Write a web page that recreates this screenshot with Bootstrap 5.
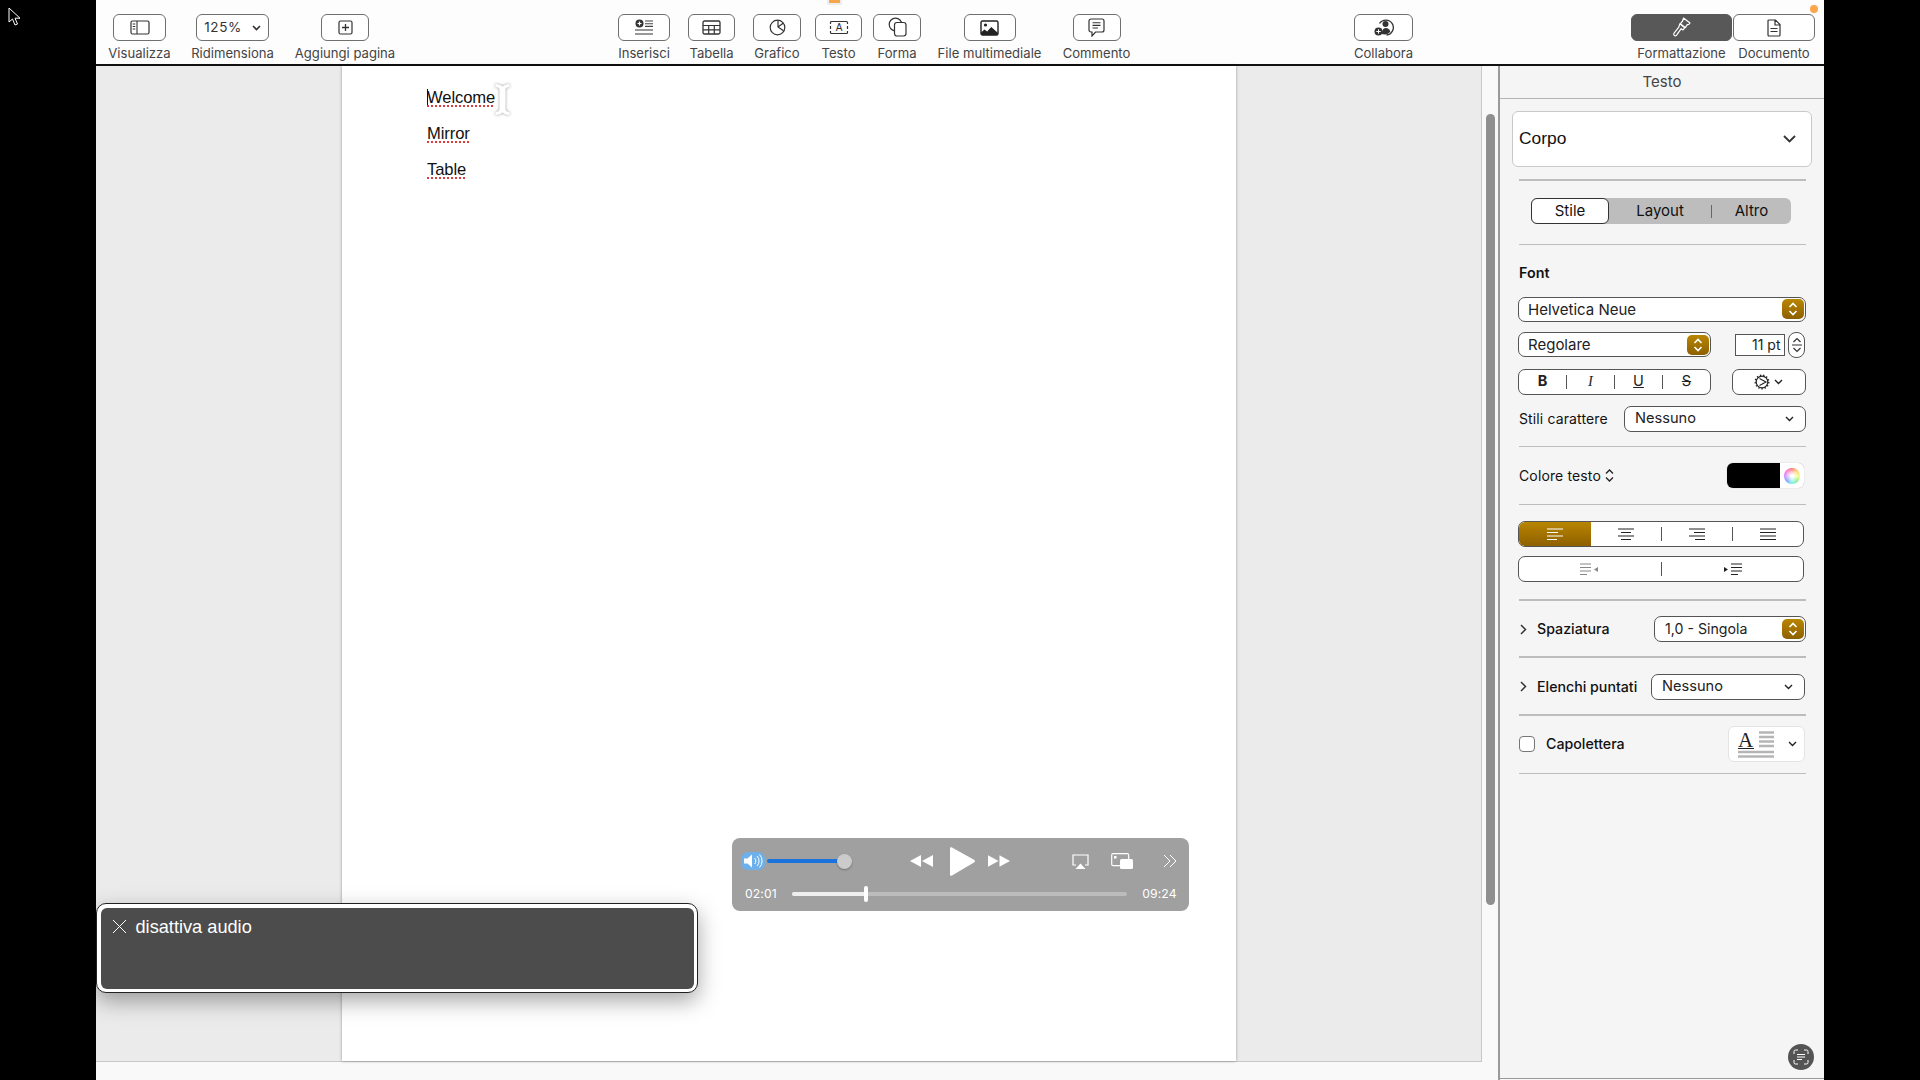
<!DOCTYPE html>
<html lang="it">
<head>
<meta charset="utf-8">
<title>Pages</title>
<link href="https://cdn.jsdelivr.net/npm/bootstrap@5.3.0/dist/css/bootstrap.min.css" rel="stylesheet">
<style>
html,body{height:100%;overflow:hidden;background:#000}
body{font-family:Inter,"Liberation Sans",sans-serif;color:#222;width:1920px;height:1080px;position:relative}
.shell{width:1728px;height:1080px;margin-left:96px;background:#f9f9f9}
.topbar{height:66px;background:#fdfdfd;border-bottom:2px solid #111;padding-left:12px}
.ti{height:64px;padding-top:14px;flex:none}
.tb{height:27px;border:1.5px solid #6f6f6f;border-radius:6px;background:#fff;padding:0;flex:none;color:#333}
.tl{font-size:13.1px;line-height:16px;margin-top:3.5px;color:#444;white-space:nowrap}
.i1{width:63px}.i1 .tb{width:53px}
.i2{width:83px;margin-left:20px}.i2 .tb{width:73px;font-size:13.5px;letter-spacing:.6px;gap:10px}
.i3{width:100px;margin-left:21px}.i3 .tb{width:48px}
.i4{width:52px;margin-left:223px}.i4 .tb{width:52px}
.i5{width:47px;margin-left:18px}.i5 .tb{width:47px}
.i6{width:48px;margin-left:18px}.i6 .tb{width:48px}
.i7{width:47px;margin-left:14px}.i7 .tb{width:47px}
.i8{width:48px;margin-left:11px}.i8 .tb{width:48px}
.i9{width:105px;margin-left:16px}.i9 .tb{width:52px}
.i10{width:67px;margin-left:21px}.i10 .tb{width:48px}
.i11{width:59px;margin-left:224px}.i11 .tb{width:59px}
.i12{width:101px;margin-left:218px}.i12 .tb{width:101px;background:#585858;border-color:#585858}
.i13{width:82px;margin-left:1px}.i13 .tb{width:82px}
.workspace{height:1014px}
.canvasarea{width:1404px;height:1014px;background:#f9f9f9;border-right:2px solid #9a9a9a;flex:none}
.canvasmain{height:996px;width:1386px;background:#ebebeb;border-right:1.5px solid #c8c8c8;border-bottom:1.5px solid #c8c8c8;position:relative}
.pagesheet{margin-left:246px;width:893.5px;height:100%;background:#fff;box-shadow:0 0 3px rgba(0,0,0,.35);padding:21.5px 0 0 85px;font-family:"Liberation Sans",sans-serif;font-size:16.6px;color:#111}
.pline{height:36px;line-height:20px;letter-spacing:-.1px}
.pword{text-decoration:underline dotted #dd3b3b 2px;text-underline-offset:3px}
.caret-mark{display:inline-block;width:1px;height:17px;background:#111;vertical-align:-3px;margin-right:-1px}
.scrollthumb{width:9.5px;height:791px;background:#8f8f8f;border-radius:5px;top:48px;left:1389.5px;position:absolute}
.inspector{width:324px;height:1013px;background:#f5f5f5;padding:0 18px;border-bottom:1.5px solid #999;flex:none}
.insp-title{height:33px;margin:0 -18px;border-bottom:1.5px solid #b5b5b5;text-align:center;font-size:15px;line-height:32.5px;color:#444}
.stylebox{height:56px;margin:11.5px -6px 0;width:300px;background:#fff;border:1.5px solid #c9c9c9;border-radius:6px;padding:0 15px 0 6px;font-size:17.4px;color:#111;font-family:"Liberation Sans",sans-serif}
.rule{height:1.5px;background:#bdbdbd;margin:0 0 0 1px}
.r1{margin-top:12.5px}.r2{margin-top:19.5px}.r3{margin-top:14px}.r5{margin-top:15.5px}.r6{margin-top:17px}.r8{margin-top:14.5px}.r9{margin-top:10.5px}
.tabs{width:260px;height:26px;margin:17.5px 0 0 13px;background:#bdbdbd;border-radius:6px;font-size:15px;color:#111}
.tabon{width:78px;height:26px;background:#fff;border:1.5px solid #333;border-radius:6px}
.tabl{width:102px}
.tabsep{width:1px;height:13px;background:#666}
.tabr{width:79px}
.flabel{font-size:14.3px;line-height:20px;font-weight:600;margin:17.5px 0 0 1px;color:#111}
.ctl{height:25px;background:#fff;border:1.5px solid #555;border-radius:7px;font-size:15px;color:#222;padding:1.5px 1px 0 9px}
.ctl .gold{margin-top:-1.5px}
.fontsel{margin-top:14px}
.w193{width:193px}
.row2{margin-top:10px;height:26px}
.row3{margin-top:11px;height:26px}
.row4{margin-top:11px;height:26px}
.gold{width:22px;height:20px;border-radius:5px;background:linear-gradient(#b98600,#8d6000);flex:none}
.ptbox{width:50px;height:22px;margin-left:23.5px;background:#fff;border:1.2px solid #555;font-size:14px;text-align:right;padding-right:3px;line-height:20px;color:#222}
.spin{width:17px;height:26px;margin-left:3.5px;background:#fff;border:1.5px solid #555;border-radius:8px}
.biu{height:26px;width:193px;background:#fff;border:1.5px solid #555;border-radius:7px;font-size:14.5px}
.biu .cellb{flex:1;text-align:center;line-height:1}
.serifi{font-family:"Liberation Serif",serif;font-style:italic}
.vsep{width:1px;height:14px;background:#555;flex:none}
.gearbtn{width:74px;height:26px;margin-left:20.500px;background:#fff;border:1.5px solid #555;border-radius:7px}
.lbl{font-size:14px;letter-spacing:.13px;color:#111;margin-left:1px;white-space:nowrap}
.lblb{font-weight:500;font-size:14.2px;letter-spacing:0}
.nsel{height:26px;background:#fff;border:1.5px solid #555;border-radius:7px;font-size:14.6px;color:#222;padding:1px 11px 0 10px}
.w182{width:182px;margin-left:auto}
.colorrow{height:25px;margin-top:16px}
.swatchwrap{width:77px;height:25px;margin-left:auto;margin-right:2px;border-radius:6px;overflow:hidden;background:#fff;box-shadow:0 0 1px rgba(0,0,0,.35)}
.swatchblack{width:53px;height:25px;background:#000}
.wheel{width:16px;height:16px;border-radius:50%;margin-left:4px;background:radial-gradient(circle,#fff 10%,rgba(255,255,255,0) 75%),conic-gradient(#f66,#fc5,#ef6,#7e7,#6ee,#69f,#c7f,#f6c,#f66)}
.alignbar{width:286px;height:26px;background:#fff;border:1.5px solid #555;border-radius:7px;overflow:hidden;margin-top:16px}
.alignbar .cellb{width:70px;height:100%;flex:none}
.alignbar .cellb.on{width:72px;background:linear-gradient(#b88500,#8e6000)}
.indentbar{width:286px;height:26px;background:#fff;border:1.5px solid #555;border-radius:7px;margin-top:9px}
.indentbar .cellb{flex:1}
.chev{margin:0 9px 0 2px;flex:none}
.spazrow{height:26px;margin-top:15.5px}
.sp152{width:152px;height:26px;margin-left:auto;background:#fff;border:1.5px solid #555;border-radius:7px;font-size:14.2px;padding:0 1px 0 10px}
.elerow{height:26px;margin-top:16px}
.sp154{width:154px;margin-left:auto;margin-right:1px}
.caprow{height:36px;margin-top:10.5px}
.chk{width:16px;height:16px;margin:0 10px 0 1px;background:#fff;border:1.2px solid #777;border-radius:4px;flex:none}
.dropcap{width:77px;height:36px;margin-left:auto;margin-right:1px;background:#fff;border:1.2px solid #e4e4e4;border-radius:6px;padding-left:9px;gap:14px}
.ocrbadge{position:absolute;left:1788px;top:1044px;width:26px;height:26px;border-radius:50%;background:#545454}
.dotorange{position:absolute;left:1810px;top:5px;width:8px;height:8px;border-radius:50%;background:#fba64a}
.topmark{position:absolute;left:827px;top:0;width:15px;height:5px;background:#f6a64b;border:2px solid #eee;border-top:0;border-radius:0 0 2px 2px}
.pointer{position:absolute;left:8px;top:7px}
.ibeam{position:absolute;left:494px;top:83px;filter:drop-shadow(0 0 1.5px rgba(0,0,0,.4))}
.vplayer{position:absolute;left:732px;top:838px;width:457px;height:73px;background:#a0a0a0;border-radius:8px;color:#fff}
.vtop{height:46px;padding-left:9px}
.vbottom{height:20px;padding:0 12px 0 13px}
.vtime{font-size:12.2px;letter-spacing:.1px;flex:none}
.vknob{width:15px;height:15px;border-radius:50%;background:#cbcbcb;box-shadow:0 1px 2px rgba(0,0,0,.3);margin-left:-2px;flex:none}
.vol{width:72px;height:4px;border-radius:2px;background:#1a73dc;margin-left:2px;flex:none}
.vtrack{width:335px;height:4px;border-radius:2px;background:#bcbcbc;position:relative;margin-left:15.5px;margin-right:15px;flex:none}
.vfill{width:74px;height:4px;background:#efefef;border-radius:2px}
.vhandle{position:absolute;left:72px;top:-6px;width:4px;height:16px;background:#fff;border-radius:2px}
.vc1{margin-left:58px}.vc2{margin-left:17px}.vc3{margin-left:13px}.vc4{margin-left:62px}.vc5{margin-left:22px}.vc6{margin-left:30px}
.vplayer svg{flex:none}
.hintbox{position:absolute;left:96px;top:903px;width:602px;height:90px;background:#fff;border:1px solid #222;border-radius:10px;padding:3.5px;box-shadow:0 8px 22px rgba(0,0,0,.35)}
.hintin{width:100%;height:100%;background:#4c4c4c;border-radius:6px;padding:8px 11px;color:#fff;font-family:"Liberation Sans",sans-serif;font-size:18.2px;line-height:22px}
.hintx{margin:3px 1px 0 0;flex:none}
</style>
</head>
<body>
<div class="shell d-flex flex-column">
  <div class="topbar d-flex">
    <div class="ti i1 d-flex flex-column align-items-center"><button class="tb d-flex align-items-center justify-content-center"><svg width="20" height="15" viewBox="0 0 20 15"><rect x="1" y="1" width="18" height="13" rx="1.5" fill="none" stroke="#333" stroke-width="1.2"/><path d="M7 1v13M2.7 4h2.6M2.7 6.5h2.6M2.7 9h2.6" stroke="#333" stroke-width="1.1"/></svg></button><div class="tl">Visualizza</div></div>
    <div class="ti i2 d-flex flex-column align-items-center"><button class="tb d-flex align-items-center justify-content-center">125%<svg width="9" height="6" viewBox="0 0 9 6"><path d="M1 1l3.5 3.5L8 1" fill="none" stroke="#333" stroke-width="1.6"/></svg></button><div class="tl">Ridimensiona</div></div>
    <div class="ti i3 d-flex flex-column align-items-center"><button class="tb d-flex align-items-center justify-content-center"><svg width="15" height="15" viewBox="0 0 15 15"><rect x="1" y="1" width="13" height="13" rx="1.5" fill="none" stroke="#333" stroke-width="1.2"/><path d="M7.5 4v7M4 7.5h7" stroke="#333" stroke-width="1.3"/></svg></button><div class="tl">Aggiungi pagina</div></div>

    <div class="ti i4 d-flex flex-column align-items-center"><button class="tb d-flex align-items-center justify-content-center"><svg width="20" height="17" viewBox="0 0 20 17"><circle cx="5.5" cy="4.5" r="4" fill="#333"/><path d="M5.5 2.5v4M3.5 4.5h4" stroke="#fff" stroke-width="1.2"/><path d="M11 2h8M11 4.7h8M11 7.4h8" stroke="#444" stroke-width="1.1"/><path d="M1 11h18M1 15h18" stroke="#777" stroke-width="1.5"/></svg></button><div class="tl">Inserisci</div></div>
    <div class="ti i5 d-flex flex-column align-items-center"><button class="tb d-flex align-items-center justify-content-center"><svg width="19" height="15" viewBox="0 0 19 15"><rect x="1" y="1" width="17" height="13" rx="1.5" fill="none" stroke="#333" stroke-width="1.3"/><path d="M1 5.5h17M1 9.8h17M6.7 5.5V14M12.3 5.5V14" stroke="#333" stroke-width="1.2"/></svg></button><div class="tl">Tabella</div></div>
    <div class="ti i6 d-flex flex-column align-items-center"><button class="tb d-flex align-items-center justify-content-center"><svg width="17" height="17" viewBox="0 0 17 17"><circle cx="8.5" cy="8.5" r="7.3" fill="none" stroke="#333" stroke-width="1.2"/><path d="M9 1.2V8l5.5 3.8M9 8l5.5-4" fill="none" stroke="#333" stroke-width="1.2"/></svg></button><div class="tl">Grafico</div></div>
    <div class="ti i7 d-flex flex-column align-items-center"><button class="tb d-flex align-items-center justify-content-center"><svg width="20" height="15" viewBox="0 0 20 15"><path d="M1.5 4V2.500a1 1 0 0 1 1-1h15a1 1 0 0 1 1 1V4M1.5 6v3M18.5 6v3M1.5 11v1.500a1 1 0 0 0 1 1h15a1 1 0 0 0 1-1V11" fill="none" stroke="#333" stroke-width="1.2"/><text x="10" y="11.2" text-anchor="middle" font-family="Liberation Sans" font-size="10" fill="#333">A</text></svg></button><div class="tl">Testo</div></div>
    <div class="ti i8 d-flex flex-column align-items-center"><button class="tb d-flex align-items-center justify-content-center"><svg width="19" height="21" viewBox="0 0 19 21"><circle cx="7.5" cy="7.5" r="6.3" fill="none" stroke="#333" stroke-width="1.2"/><rect x="6.5" y="5.5" width="11.5" height="13.5" rx="2.4" fill="#fff" stroke="#333" stroke-width="1.2"/></svg></button><div class="tl">Forma</div></div>
    <div class="ti i9 d-flex flex-column align-items-center"><button class="tb d-flex align-items-center justify-content-center"><svg width="19" height="16" viewBox="0 0 19 16"><rect x="1" y="1" width="17" height="14" rx="1.5" fill="#fff" stroke="#222" stroke-width="1.4"/><circle cx="5.5" cy="5" r="1.6" fill="#222"/><path d="M1 15v-2.500l3.500-3 2.600 2 4.200-4.600 6.700 6V15z" fill="#222"/></svg></button><div class="tl">File multimediale</div></div>
    <div class="ti i10 d-flex flex-column align-items-center"><button class="tb d-flex align-items-center justify-content-center"><svg width="17" height="19" viewBox="0 0 17 19"><path d="M3 1h11a2 2 0 0 1 2 2v9a2 2 0 0 1-2 2H7.500L4 18v-4H3a2 2 0 0 1-2-2V3a2 2 0 0 1 2-2z" fill="none" stroke="#333" stroke-width="1.2"/><path d="M4.5 4.7h8M4.5 7.4h8M4.5 10h5.5" stroke="#333" stroke-width="1.1"/></svg></button><div class="tl">Commento</div></div>

    <div class="ti i11 d-flex flex-column align-items-center"><button class="tb d-flex align-items-center justify-content-center"><svg width="20" height="19" viewBox="0 0 20 19"><path d="M5.5 5.500a7.500 7.500 0 1 1 7 11.500" fill="none" stroke="#333" stroke-width="1.3"/><circle cx="11.5" cy="6" r="3" fill="#333"/><path d="M8 16c-.3-3 1.300-6 3.700-6s4 1.500 4.600 3.500c-1.500 2.500-5 3.500-8.300 2.500z" fill="#333"/><circle cx="4.5" cy="13.5" r="4" fill="#333"/><path d="M4.5 11.300v4.400M2.300 13.500h4.400" stroke="#fff" stroke-width="1"/></svg></button><div class="tl">Collabora</div></div>
    <div class="ti i12 d-flex flex-column align-items-center"><button class="tb d-flex align-items-center justify-content-center"><svg width="18" height="21" viewBox="0 0 18 21"><path d="M10.500 1l6.500 5-1.200 1.500-1.500.2-2 3-5-3.900 2.300-2.800z" fill="none" stroke="#fff" stroke-width="1.2" stroke-linejoin="round"/><path d="M6.800 6.800l5 3.900-1.800 2.300-1.800-1.300-4.600 6.500a1.600 1.600 0 1 1-2.500-2l4.700-6z" fill="none" stroke="#fff" stroke-width="1.2" stroke-linejoin="round"/></svg></button><div class="tl">Formattazione</div></div>
    <div class="ti i13 d-flex flex-column align-items-center"><button class="tb d-flex align-items-center justify-content-center"><svg width="14" height="18" viewBox="0 0 14 18"><path d="M1 2a1 1 0 0 1 1-1h6.500L13 5.500V16a1 1 0 0 1-1 1H2a1 1 0 0 1-1-1zM8 1v5h5" fill="none" stroke="#333" stroke-width="1.2"/><path d="M3.5 9.500h7M3.5 12.500h7" stroke="#333" stroke-width="1.1"/></svg></button><div class="tl">Documento</div></div>
  </div>

  <div class="workspace d-flex">
    <div class="canvasarea position-relative">
      <div class="canvasmain">
        <div class="pagesheet">
          <div class="pline"><span class="caret-mark"></span><span class="pword">Welcome</span></div>
          <div class="pline"><span class="pword">Mirror</span></div>
          <div class="pline"><span class="pword">Table</span></div>
        </div>
      </div>
      <div class="scrollthumb"></div>
    </div>

    <aside class="inspector">
      <div class="insp-title">Testo</div>
      <div class="stylebox d-flex align-items-center justify-content-between">Corpo<svg width="13" height="8" viewBox="0 0 13 8"><path d="M1 1l5.500 5.500L12 1" fill="none" stroke="#333" stroke-width="1.8"/></svg></div>
      <div class="rule r1"></div>
      <div class="tabs d-flex align-items-center">
        <div class="tabon d-flex align-items-center justify-content-center">Stile</div>
        <div class="tabl text-center">Layout</div><div class="tabsep"></div><div class="tabr text-center">Altro</div>
      </div>
      <div class="rule r2"></div>
      <div class="flabel">Font</div>
      <div class="ctl fontsel d-flex align-items-center justify-content-between">Helvetica Neue<span class="gold d-flex align-items-center justify-content-center"><svg width="10" height="14" viewBox="0 0 10 14"><path d="M1.500 5L5 1.500 8.500 5M1.500 9L5 12.500 8.500 9" fill="none" stroke="#fff" stroke-width="1.6"/></svg></span></div>
      <div class="row2 d-flex align-items-center">
        <div class="ctl w193 d-flex align-items-center justify-content-between">Regolare<span class="gold d-flex align-items-center justify-content-center"><svg width="10" height="14" viewBox="0 0 10 14"><path d="M1.500 5L5 1.500 8.500 5M1.500 9L5 12.500 8.500 9" fill="none" stroke="#fff" stroke-width="1.6"/></svg></span></div>
        <div class="ptbox">11 pt</div>
        <div class="spin d-flex flex-column align-items-center justify-content-center"><svg width="10" height="18" viewBox="0 0 10 18"><path d="M1.500 6L5 2.500 8.500 6M0 9h10M1.500 12L5 15.500 8.500 12" fill="none" stroke="#333" stroke-width="1.2"/></svg></div>
      </div>
      <div class="row3 d-flex align-items-center">
        <div class="biu d-flex align-items-center">
          <div class="cellb"><b>B</b></div><div class="vsep"></div>
          <div class="cellb"><span class="serifi">I</span></div><div class="vsep"></div>
          <div class="cellb text-decoration-underline">U</div><div class="vsep"></div>
          <div class="cellb text-decoration-line-through">S</div>
        </div>
        <div class="gearbtn d-flex align-items-center justify-content-center gap-1"><svg width="16" height="16" viewBox="0 0 16 16"><circle cx="8" cy="8" r="5.8" fill="none" stroke="#222" stroke-width="1.2"/><circle cx="8" cy="8" r="6.8" fill="none" stroke="#222" stroke-width="1.4" stroke-dasharray="1.3 2"/><path d="M5.500 4.500L12 8l-6.500 3.500" fill="none" stroke="#222" stroke-width="1.1"/></svg><svg width="9" height="6" viewBox="0 0 9 6"><path d="M1 1l3.500 3.500L8 1" fill="none" stroke="#222" stroke-width="1.4"/></svg></div>
      </div>
      <div class="row4 d-flex align-items-center">
        <span class="lbl">Stili carattere</span>
        <div class="nsel w182 d-flex align-items-center justify-content-between">Nessuno<svg width="9" height="6" viewBox="0 0 9 6"><path d="M1 1l3.500 3.500L8 1" fill="none" stroke="#222" stroke-width="1.4"/></svg></div>
      </div>
      <div class="rule r3"></div>
      <div class="colorrow d-flex align-items-center">
        <span class="lbl">Colore testo</span>
        <svg class="ms-1" width="9" height="13" viewBox="0 0 9 13"><path d="M1 4.500L4.500 1 8 4.500M1 8.500L4.500 12 8 8.500" fill="none" stroke="#222" stroke-width="1.3"/></svg>
        <div class="swatchwrap d-flex align-items-center"><div class="swatchblack"></div><div class="wheel"></div></div>
      </div>
      <div class="rule r5"></div>
      <div class="alignbar d-flex align-items-center">
        <div class="cellb on d-flex align-items-center justify-content-center"><svg width="16" height="13" viewBox="0 0 16 13"><path d="M0 1h16M0 4.500h11M0 8h16M0 11.500h10" stroke="#fff" stroke-width="1.1"/></svg></div>
        <div class="cellb d-flex align-items-center justify-content-center"><svg width="16" height="13" viewBox="0 0 16 13"><path d="M0 1h16M3 4.500h10M0 8h16M3 11.500h10" stroke="#222" stroke-width="1.1"/></svg></div><div class="vsep"></div>
        <div class="cellb d-flex align-items-center justify-content-center"><svg width="16" height="13" viewBox="0 0 16 13"><path d="M0 1h16M5 4.500h11M0 8h16M6 11.500h10" stroke="#222" stroke-width="1.1"/></svg></div><div class="vsep"></div>
        <div class="cellb d-flex align-items-center justify-content-center"><svg width="16" height="13" viewBox="0 0 16 13"><path d="M0 1h16M0 4.500h16M0 8h16M0 11.500h16" stroke="#222" stroke-width="1.1"/></svg></div>
      </div>
      <div class="indentbar d-flex align-items-center">
        <div class="cellb d-flex align-items-center justify-content-center"><svg width="19" height="13" viewBox="0 0 19 13"><path d="M0 1h11M0 4.500h11M0 8h11M0 11.500h7" stroke="#888" stroke-width="1.1"/><path d="M18 4v5l-4-2.500z" fill="#888"/></svg></div><div class="vsep"></div>
        <div class="cellb d-flex align-items-center justify-content-center"><svg width="19" height="13" viewBox="0 0 19 13"><path d="M8 1h11M8 4.500h11M8 8h11M8 11.500h7" stroke="#222" stroke-width="1.1"/><path d="M1 4v5l4-2.500z" fill="#222"/></svg></div>
      </div>
      <div class="rule r6"></div>
      <div class="spazrow d-flex align-items-center">
        <svg class="chev" width="7" height="11" viewBox="0 0 7 11"><path d="M1 1l4.500 4.500L1 10" fill="none" stroke="#333" stroke-width="1.5"/></svg>
        <span class="lbl lblb">Spaziatura</span>
        <div class="sp152 d-flex align-items-center justify-content-between">1,0 - Singola<span class="gold d-flex align-items-center justify-content-center"><svg width="10" height="14" viewBox="0 0 10 14"><path d="M1.500 5L5 1.500 8.500 5M1.500 9L5 12.500 8.500 9" fill="none" stroke="#fff" stroke-width="1.6"/></svg></span></div>
      </div>
      <div class="rule r3"></div>
      <div class="elerow d-flex align-items-center">
        <svg class="chev" width="7" height="11" viewBox="0 0 7 11"><path d="M1 1l4.500 4.500L1 10" fill="none" stroke="#333" stroke-width="1.5"/></svg>
        <span class="lbl lblb">Elenchi puntati</span>
        <div class="nsel sp154 d-flex align-items-center justify-content-between">Nessuno<svg width="9" height="6" viewBox="0 0 9 6"><path d="M1 1l3.500 3.500L8 1" fill="none" stroke="#222" stroke-width="1.4"/></svg></div>
      </div>
      <div class="rule r8"></div>
      <div class="caprow d-flex align-items-center">
        <div class="chk"></div><span class="lbl lblb">Capolettera</span>
        <div class="dropcap d-flex align-items-center"><svg width="36" height="27" viewBox="0 0 36 27"><text x="0" y="16" font-family="Liberation Serif" font-size="21" fill="#222">A</text><path d="M0 17.500h16" stroke="#222" stroke-width="1"/><path d="M21 1.500h15M21 6h15M21 10.500h15M21 15h15" stroke="#b5b5b5" stroke-width="2.4"/><path d="M0 21h36M0 25.500h36" stroke="#b5b5b5" stroke-width="2.4"/></svg><svg width="9" height="6" viewBox="0 0 9 6"><path d="M1 1l3.500 3.500L8 1" fill="none" stroke="#222" stroke-width="1.4"/></svg></div>
      </div>
      <div class="rule r9"></div>
    </aside>
  </div>
</div>

<span class="topmark"></span>
<span class="dotorange"></span>

<svg class="pointer" width="14" height="20" viewBox="0 0 14 20"><path d="M1 1v14l3.500-3 2.500 6 2.500-1-2.500-5.800H12z" fill="#000" stroke="#fff" stroke-width="1"/></svg>

<svg class="ibeam" width="17" height="33" viewBox="0 0 17 33"><path d="M1.500 1c3 0 5.500 1 7 2.500C10 2 12.500 1 15.500 1v3c-2.500 0-4 1-4 3v19c0 2 1.500 3 4 3v3c-3 0-5.500-1-7-2.500C7 31 4.500 32 1.500 32v-3c2.500 0 4-1 4-3V7c0-2-1.500-3-4-3z" fill="#fff"/></svg>

<div class="vplayer">
  <div class="vtop d-flex align-items-center">
    <svg width="24" height="20" viewBox="0 0 24 20"><rect x="0" y="1" width="24" height="18" rx="7" fill="#6db0ea"/><path d="M3 7.500h3.500L11 3.500v13l-4.500-4H3z" fill="#fff"/><path d="M13.500 7a4 4 0 0 1 0 6M16 5a7 7 0 0 1 0 10M18.500 3.500a9.500 9.500 0 0 1 0 13" fill="none" stroke="#fff" stroke-width="1"/></svg>
    <div class="vol"></div><div class="vknob"></div>
    <svg class="vc1" width="23" height="14" viewBox="0 0 23 14"><path d="M11 1v12L0 7zM23 1v12L12 7z" fill="#fff"/></svg>
    <svg class="vc2" width="25" height="29" viewBox="0 0 25 29"><path d="M0 1.500C0 .3 1 0 2 .6l22 12.200c1.200.7 1.200 2 0 2.700L2 28.400c-1 .6-2 .2-2-1z" fill="#fff"/></svg>
    <svg class="vc3" width="22" height="14" viewBox="0 0 23 14"><path d="M0 1v12l11-6zM12 1v12l11-6z" fill="#fff"/></svg>
    <svg class="vc4" width="17" height="15" viewBox="0 0 17 15"><path d="M4 11H1V1h15v10h-3" fill="none" stroke="#fff" stroke-width="1.2"/><path d="M3.500 15l5-5.500 5 5.500z" fill="#fff"/></svg>
    <svg class="vc5" width="22" height="16" viewBox="0 0 22 16"><rect x=".7" y=".7" width="17" height="12" rx="1.5" fill="none" stroke="#fff" stroke-width="1.2"/><rect x="3" y="3" width="2.5" height="2.5" fill="#fff"/><rect x="9" y="6" width="13" height="10" rx="1.5" fill="#fff"/></svg>
    <svg class="vc6" width="14" height="14" viewBox="0 0 14 14"><path d="M1 1l6 6-6 6M7 1l6 6-6 6" fill="none" stroke="#fff" stroke-width="1"/></svg>
  </div>
  <div class="vbottom d-flex align-items-center">
    <span class="vtime">02:01</span>
    <div class="vtrack"><div class="vfill"></div><div class="vhandle"></div></div>
    <span class="vtime">09:24</span>
  </div>
</div>

<div class="hintbox">
  <div class="hintin d-flex align-items-start gap-2">
    <svg class="hintx" width="15" height="15" viewBox="0 0 15 15"><path d="M1 1l13 13M14 1L1 14" stroke="#fff" stroke-width="1"/></svg>
    <span>disattiva audio</span>
  </div>
</div>

<div class="ocrbadge d-flex align-items-center justify-content-center"><svg width="16" height="16" viewBox="0 0 16 16"><path d="M1 5V2.500A1.500 1.500 0 0 1 2.500 1H5M11 1h2.500A1.500 1.500 0 0 1 15 2.500V5M15 11v2.500a1.500 1.500 0 0 1-1.500 1.500H11M5 15H2.500A1.500 1.500 0 0 1 1 13.500V11M4 5.500h8M4 8h8M4 10.500h5" fill="none" stroke="#fff" stroke-width="1"/></svg></div>

<script src="https://cdn.jsdelivr.net/npm/bootstrap@5.3.0/dist/js/bootstrap.bundle.min.js"></script>
</body>
</html>
